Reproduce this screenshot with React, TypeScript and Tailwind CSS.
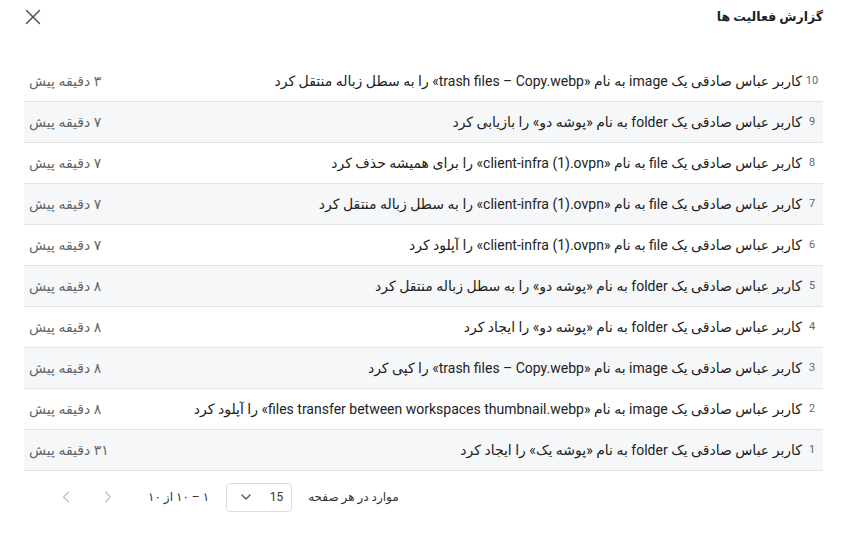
import { X, ChevronDown, ChevronLeft, ChevronRight } from "lucide-react";

interface ActivityRow {
  id: number;
  text: string;
  time: string;
}

const rows: ActivityRow[] = [
  { id: 10, text: "کاربر عباس صادقی یک image به نام «trash files – Copy.webp» را به سطل زباله منتقل کرد", time: "۳ دقیقه پیش" },
  { id: 9, text: "کاربر عباس صادقی یک folder به نام «پوشه دو» را بازیابی کرد", time: "۷ دقیقه پیش" },
  { id: 8, text: "کاربر عباس صادقی یک file به نام «client-infra (1).ovpn» را برای همیشه حذف کرد", time: "۷ دقیقه پیش" },
  { id: 7, text: "کاربر عباس صادقی یک file به نام «client-infra (1).ovpn» را به سطل زباله منتقل کرد", time: "۷ دقیقه پیش" },
  { id: 6, text: "کاربر عباس صادقی یک file به نام «client-infra (1).ovpn» را آپلود کرد", time: "۷ دقیقه پیش" },
  { id: 5, text: "کاربر عباس صادقی یک folder به نام «پوشه دو» را به سطل زباله منتقل کرد", time: "۸ دقیقه پیش" },
  { id: 4, text: "کاربر عباس صادقی یک folder به نام «پوشه دو» را ایجاد کرد", time: "۸ دقیقه پیش" },
  { id: 3, text: "کاربر عباس صادقی یک image به نام «trash files – Copy.webp» را کپی کرد", time: "۸ دقیقه پیش" },
  { id: 2, text: "کاربر عباس صادقی یک image به نام «files transfer between workspaces thumbnail.webp» را آپلود کرد", time: "۸ دقیقه پیش" },
  { id: 1, text: "کاربر عباس صادقی یک folder به نام «پوشه یک» را ایجاد کرد", time: "۳۱ دقیقه پیش" },
];

export default function App() {
  return (
    <div
      dir="rtl"
      className="w-[847px] h-[539px] bg-white px-6 pt-[6px] text-[#222]"
      style={{ fontFamily: '"Roboto", "Noto Sans", "DejaVu Sans", sans-serif' }}
    >
      {/* header */}
      <div className="flex items-center justify-between h-[22px]">
        <h2 className="text-[12.5px] font-bold text-[#222]">گزارش فعالیت ها</h2>
        <button className="ml-[-4px] text-[#555]">
          <X className="w-[26px] h-[26px]" strokeWidth={1.4} />
        </button>
      </div>

      {/* table */}
      <div className="mt-[33px]">
        {rows.map((row, i) => (
          <div
            key={row.id}
            className={`flex items-center h-[41px] border-b border-[#e3e4e6] ${i % 2 === 1 ? "bg-[#f6f7f9]" : "bg-white"}`}
          >
            <span className="w-[16px] mr-[3px] ml-[2px] text-[11px] text-[#666] text-center">{row.id}</span>
            <span className="flex-1 text-[14px] text-[#222]">{row.text}</span>
            <span className="ml-[5px] text-[14px] text-[#666]">{row.time}</span>
          </div>
        ))}
      </div>

      {/* paginator */}
      <div className="flex items-center justify-end h-[48px] mt-[2px] pl-[32px] text-[12px] text-[#333]">
        <span className="ml-[16px]">موارد در هر صفحه</span>
        <div className="flex items-center justify-between w-[66px] h-[29px] border border-[#dcdcdc] rounded-[4px] pr-[8px] pl-[11px] ml-[17px]">
          <span className="text-[12px]">15</span>
          <ChevronDown className="w-4 h-4 text-[#555]" strokeWidth={2} />
        </div>
        <span className="ml-[30px]">۱ – ۱۰ از ۱۰</span>
        <div className="flex items-center gap-[22px]">
          <ChevronRight className="w-5 h-5 text-[#c4c4c4]" strokeWidth={1.5} />
          <ChevronLeft className="w-5 h-5 text-[#c4c4c4]" strokeWidth={1.5} />
        </div>
      </div>
    </div>
  );
}
